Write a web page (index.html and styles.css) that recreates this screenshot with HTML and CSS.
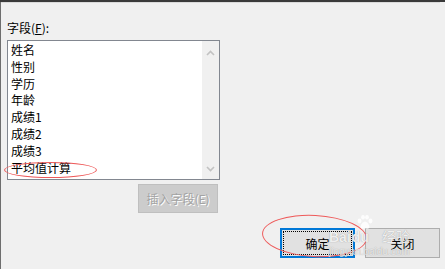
FILE: index.html
```html
<!DOCTYPE html>
<html lang="zh-CN">
<head>
    <meta charset="UTF-8">
    <title>插入字段</title>
    <link rel="stylesheet" href="styles.css">
</head>
<body>
    <div class="window">
        <div class="rule"></div>

        <div class="content">
            <div class="field-label">字段(<u>F</u>):</div>

            <div class="listbox">
                <ul class="items">
                    <li>姓名</li>
                    <li>性别</li>
                    <li>学历</li>
                    <li>年龄</li>
                    <li>成绩1</li>
                    <li>成绩2</li>
                    <li>成绩3</li>
                    <li class="marked">平均值计算<span class="ring ring-item"></span></li>
                </ul>
                <div class="scrollbar">
                    <svg class="arrow" width="9" height="6" viewBox="0 0 9 6"><path d="M1 5 L4.5 1.5 L8 5" fill="none" stroke="#c2c2c2" stroke-width="1.6"/></svg>
                    <svg class="arrow" width="9" height="6" viewBox="0 0 9 6"><path d="M1 1 L4.5 4.5 L8 1" fill="none" stroke="#c2c2c2" stroke-width="1.6"/></svg>
                </div>
            </div>

            <div class="insert-row">
                <button class="btn btn-disabled" disabled>插入字段(E)</button>
            </div>
        </div>

        <div class="actions">
            <button class="btn btn-default"><span class="focus">确定</span></button>
            <button class="btn">关闭</button>
            <div class="ring ring-ok"></div>

            <!-- 水印 -->
            <div class="watermark">
                <div class="wm-top">
                    <span class="wm-bai">Bai</span>
                    <div class="wm-du-col">
                        <svg class="wm-paw" width="16" height="14" viewBox="0 0 16 14">
                            <ellipse cx="2.5" cy="6" rx="2" ry="2.4"/>
                            <ellipse cx="6" cy="2.2" rx="1.9" ry="2.2"/>
                            <ellipse cx="10" cy="2.2" rx="1.9" ry="2.2"/>
                            <ellipse cx="13.5" cy="6" rx="2" ry="2.4"/>
                            <path d="M8 6.5 C5.5 6.5 3.5 10.5 3.5 12 C3.5 14 6 14 8 13.2 C10 14 12.5 14 12.5 12 C12.5 10.5 10.5 6.5 8 6.5 Z"/>
                        </svg>
                        <span class="wm-du">du</span>
                    </div>
                    <span class="wm-jy">经验</span>
                </div>
                <div class="wm-url">jingyan.baidu.com</div>
            </div>
        </div>
    </div>
</body>
</html>
```

FILE: styles.css
```css
* {
    margin: 0;
    padding: 0;
    box-sizing: border-box;
}

body {
    width: 445px;
    height: 269px;
    overflow: hidden;
    background: #3a3a3a;
    font-family: "Noto Sans CJK SC", "Noto Sans", sans-serif;
    font-size: 12px;
    color: #000;
}

.window {
    height: 268px;
    background: #f0f0f0;
    border-left: 1px solid #6e6e6e;
    border-bottom: 1px solid #8a8a8a;
}

.rule {
    margin-top: 2px;
    width: 439px;
    height: 1px;
    background: #dadada;
}

.content {
    padding-left: 6px;
}

.field-label {
    margin-top: 17px;
    line-height: 16px;
}

.field-label u {
    text-underline-offset: 1px;
}

.listbox {
    margin-top: 4px;
    width: 213px;
    height: 140px;
    border: 1px solid #828790;
    background: #fff;
    display: flex;
}

.items {
    flex: 1;
    list-style: none;
    padding: 1px 0 0 3px;
}

.items li {
    line-height: 16.8px;
    height: 16.8px;
    white-space: nowrap;
}

.marked {
    position: relative;
}

.scrollbar {
    width: 17px;
    background: #f0f0f0;
    display: flex;
    flex-direction: column;
    justify-content: space-between;
    align-items: center;
    padding: 9px 0 7px;
}

.arrow {
    display: block;
}

.insert-row {
    margin-top: 4px;
    padding-left: 131px;
}

.btn {
    font-family: inherit;
    font-size: 12px;
    width: 75px;
    height: 30px;
    background: #e1e1e1;
    border: 1px solid #adadad;
    color: #000;
}

.btn-disabled {
    width: 80px;
    height: 29px;
    background: #cccccc;
    border-color: #bfbfbf;
    color: #a3a3a3;
    text-shadow: 1px 1px 0 #ffffff;
}

.actions {
    position: relative;
    margin-top: 15px;
    padding-right: 5px;
    display: flex;
    justify-content: flex-end;
    align-items: center;
    gap: 10px;
}

.btn-default {
    border: 2px solid #0078d7;
    padding: 1px;
}

.focus {
    display: flex;
    align-items: center;
    justify-content: center;
    height: 100%;
    border: 1px dotted #000;
}

.ring {
    position: absolute;
    border: 1px solid #ee5a5a;
    border-radius: 50%;
    pointer-events: none;
}

.ring-item {
    left: -7px;
    top: 2px;
    width: 93px;
    height: 16px;
}

.ring-ok {
    left: 261px;
    top: -13px;
    width: 105px;
    height: 42px;
    transform: rotate(3deg);
}

/* 百度经验水印 */
.watermark {
    position: absolute;
    left: 328px;
    top: -13px;
    color: rgba(255, 255, 255, 0.85);
    text-shadow: 0 0 1px rgba(110, 110, 110, 0.7);
    pointer-events: none;
    font-family: "Liberation Sans", sans-serif;
}

.wm-top {
    display: flex;
    align-items: flex-end;
}

.wm-bai,
.wm-du {
    font-size: 14px;
    font-weight: bold;
    line-height: 13px;
}

.wm-du-col {
    display: flex;
    flex-direction: column;
    align-items: flex-end;
    margin-left: 1px;
}

.wm-paw {
    display: block;
    fill: rgba(255, 255, 255, 0.85);
    margin: 0 -4px 2px 0;
}

.wm-jy {
    font-family: "Noto Sans CJK SC", sans-serif;
    font-size: 14px;
    line-height: 15px;
    margin-left: 13px;
}

.wm-url {
    font-size: 10px;
    line-height: 11px;
    margin-top: 2px;
    color: rgba(255, 255, 255, 0.75);
}
```
